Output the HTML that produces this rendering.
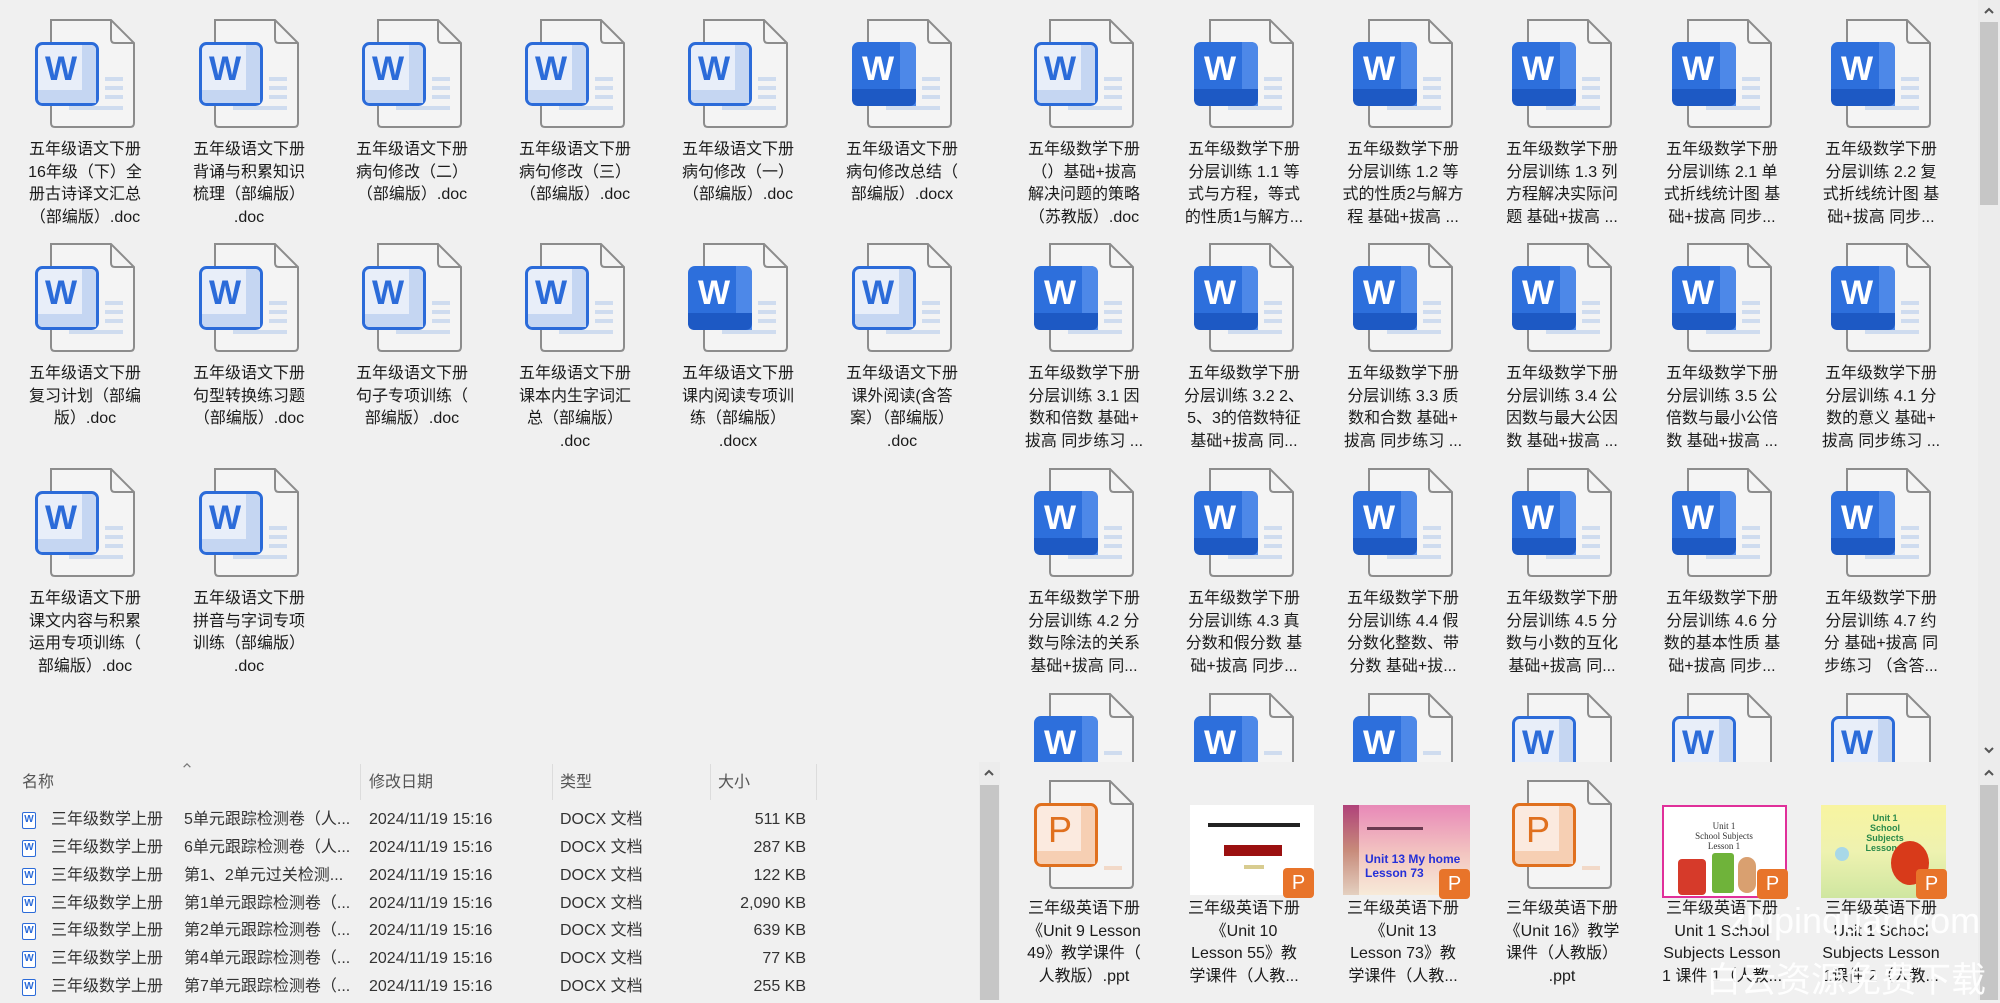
<!DOCTYPE html>
<html><head><meta charset="utf-8"><style>
*{margin:0;padding:0;box-sizing:border-box}
body{width:2000px;height:1000px;background:#f0f0f0;position:relative;overflow:hidden;font-family:"Liberation Sans","Noto Sans CJK SC",sans-serif;color:#1a1a1a}
.pane{position:absolute;overflow:hidden}
.it{position:absolute;width:160px}
.it svg{position:absolute;left:30px;top:0;width:100px;height:110px}
.it .t{position:absolute;left:0;top:120px;width:160px;text-align:center;font-size:16px;line-height:22.5px;white-space:nowrap}
.sb{position:absolute;background:#ececec}
.thumb{position:absolute;left:30px;top:25px;width:124px;height:90px}
.pb{position:absolute;width:31px;height:30px;background:#e8742a;border-radius:4px;color:#fff;font-size:20px;text-align:center;line-height:30px}
.row{position:absolute;left:0;height:28px;font-size:16px;line-height:28px;color:#333;white-space:nowrap}
.row span{position:absolute}
.hd{position:absolute;font-size:16px;color:#555}
.sep{position:absolute;top:764px;width:1px;height:36px;background:#dcdcdc}
.wi{position:absolute;left:22px;top:6px;width:14px;height:17px;border:1.5px solid #2b6bd9;border-radius:2px;background:#fff;color:#2b6bd9;font-size:10px;font-weight:bold;line-height:14px;text-align:center}
.chev{position:absolute;width:12px;height:8px}
</style></head><body>

<!-- Left top pane -->
<div class="pane" style="left:0;top:0;width:1000px;height:762px">
<div class="it" style="left:5px;top:19px"><svg viewBox="0 0 100 110"><path d="M16 1H76L99 24V104Q99 108 95 108H20Q16 108 16 104Z" fill="#f4f4f4" stroke="#8c8c8c" stroke-width="2"/><path d="M76 1V20Q76 24 80 24H99" fill="none" stroke="#8c8c8c" stroke-width="2"/><path d="M70 60H88M70 69H88M70 78H88M34 89H88" stroke="#cfdcef" stroke-width="4"/><rect x="1.5" y="24.5" width="61" height="61" rx="6" fill="#e8eef9" stroke="#2b6bd9" stroke-width="3"/><path d="M47 26H55Q61 26 61 32V84H47Z" fill="#c5d6f2"/><path d="M3 71H61V79Q61 84 56 84H8Q3 84 3 79Z" fill="#c5d6f2"/><text x="26" y="61" font-size="34" font-weight="bold" fill="#2b6bd9" text-anchor="middle" font-family="Liberation Sans">W</text></svg><div class="t">五年级语文下册<br>16年级（下）全<br>册古诗译文汇总<br>（部编版）.doc</div></div>
<div class="it" style="left:169px;top:19px"><svg viewBox="0 0 100 110"><path d="M16 1H76L99 24V104Q99 108 95 108H20Q16 108 16 104Z" fill="#f4f4f4" stroke="#8c8c8c" stroke-width="2"/><path d="M76 1V20Q76 24 80 24H99" fill="none" stroke="#8c8c8c" stroke-width="2"/><path d="M70 60H88M70 69H88M70 78H88M34 89H88" stroke="#cfdcef" stroke-width="4"/><rect x="1.5" y="24.5" width="61" height="61" rx="6" fill="#e8eef9" stroke="#2b6bd9" stroke-width="3"/><path d="M47 26H55Q61 26 61 32V84H47Z" fill="#c5d6f2"/><path d="M3 71H61V79Q61 84 56 84H8Q3 84 3 79Z" fill="#c5d6f2"/><text x="26" y="61" font-size="34" font-weight="bold" fill="#2b6bd9" text-anchor="middle" font-family="Liberation Sans">W</text></svg><div class="t">五年级语文下册<br>背诵与积累知识<br>梳理（部编版）<br>.doc</div></div>
<div class="it" style="left:332px;top:19px"><svg viewBox="0 0 100 110"><path d="M16 1H76L99 24V104Q99 108 95 108H20Q16 108 16 104Z" fill="#f4f4f4" stroke="#8c8c8c" stroke-width="2"/><path d="M76 1V20Q76 24 80 24H99" fill="none" stroke="#8c8c8c" stroke-width="2"/><path d="M70 60H88M70 69H88M70 78H88M34 89H88" stroke="#cfdcef" stroke-width="4"/><rect x="1.5" y="24.5" width="61" height="61" rx="6" fill="#e8eef9" stroke="#2b6bd9" stroke-width="3"/><path d="M47 26H55Q61 26 61 32V84H47Z" fill="#c5d6f2"/><path d="M3 71H61V79Q61 84 56 84H8Q3 84 3 79Z" fill="#c5d6f2"/><text x="26" y="61" font-size="34" font-weight="bold" fill="#2b6bd9" text-anchor="middle" font-family="Liberation Sans">W</text></svg><div class="t">五年级语文下册<br>病句修改（二）<br>（部编版）.doc</div></div>
<div class="it" style="left:495px;top:19px"><svg viewBox="0 0 100 110"><path d="M16 1H76L99 24V104Q99 108 95 108H20Q16 108 16 104Z" fill="#f4f4f4" stroke="#8c8c8c" stroke-width="2"/><path d="M76 1V20Q76 24 80 24H99" fill="none" stroke="#8c8c8c" stroke-width="2"/><path d="M70 60H88M70 69H88M70 78H88M34 89H88" stroke="#cfdcef" stroke-width="4"/><rect x="1.5" y="24.5" width="61" height="61" rx="6" fill="#e8eef9" stroke="#2b6bd9" stroke-width="3"/><path d="M47 26H55Q61 26 61 32V84H47Z" fill="#c5d6f2"/><path d="M3 71H61V79Q61 84 56 84H8Q3 84 3 79Z" fill="#c5d6f2"/><text x="26" y="61" font-size="34" font-weight="bold" fill="#2b6bd9" text-anchor="middle" font-family="Liberation Sans">W</text></svg><div class="t">五年级语文下册<br>病句修改（三）<br>（部编版）.doc</div></div>
<div class="it" style="left:658px;top:19px"><svg viewBox="0 0 100 110"><path d="M16 1H76L99 24V104Q99 108 95 108H20Q16 108 16 104Z" fill="#f4f4f4" stroke="#8c8c8c" stroke-width="2"/><path d="M76 1V20Q76 24 80 24H99" fill="none" stroke="#8c8c8c" stroke-width="2"/><path d="M70 60H88M70 69H88M70 78H88M34 89H88" stroke="#cfdcef" stroke-width="4"/><rect x="1.5" y="24.5" width="61" height="61" rx="6" fill="#e8eef9" stroke="#2b6bd9" stroke-width="3"/><path d="M47 26H55Q61 26 61 32V84H47Z" fill="#c5d6f2"/><path d="M3 71H61V79Q61 84 56 84H8Q3 84 3 79Z" fill="#c5d6f2"/><text x="26" y="61" font-size="34" font-weight="bold" fill="#2b6bd9" text-anchor="middle" font-family="Liberation Sans">W</text></svg><div class="t">五年级语文下册<br>病句修改（一）<br>（部编版）.doc</div></div>
<div class="it" style="left:822px;top:19px"><svg viewBox="0 0 100 110"><path d="M16 1H76L99 24V104Q99 108 95 108H20Q16 108 16 104Z" fill="#f4f4f4" stroke="#8c8c8c" stroke-width="2"/><path d="M76 1V20Q76 24 80 24H99" fill="none" stroke="#8c8c8c" stroke-width="2"/><path d="M70 60H88M70 69H88M70 78H88M34 89H88" stroke="#cfdcef" stroke-width="4"/><rect x="0" y="23" width="64" height="64" rx="7" fill="#2d6fdc"/><path d="M48 23H57Q64 23 64 30V87H48Z" fill="#4d88e8"/><path d="M0 70H64V80Q64 87 57 87H7Q0 87 0 80Z" fill="#1d59c4"/><text x="26" y="61" font-size="34" font-weight="bold" fill="#fff" text-anchor="middle" font-family="Liberation Sans">W</text></svg><div class="t">五年级语文下册<br>病句修改总结（<br>部编版）.docx</div></div>
<div class="it" style="left:5px;top:243px"><svg viewBox="0 0 100 110"><path d="M16 1H76L99 24V104Q99 108 95 108H20Q16 108 16 104Z" fill="#f4f4f4" stroke="#8c8c8c" stroke-width="2"/><path d="M76 1V20Q76 24 80 24H99" fill="none" stroke="#8c8c8c" stroke-width="2"/><path d="M70 60H88M70 69H88M70 78H88M34 89H88" stroke="#cfdcef" stroke-width="4"/><rect x="1.5" y="24.5" width="61" height="61" rx="6" fill="#e8eef9" stroke="#2b6bd9" stroke-width="3"/><path d="M47 26H55Q61 26 61 32V84H47Z" fill="#c5d6f2"/><path d="M3 71H61V79Q61 84 56 84H8Q3 84 3 79Z" fill="#c5d6f2"/><text x="26" y="61" font-size="34" font-weight="bold" fill="#2b6bd9" text-anchor="middle" font-family="Liberation Sans">W</text></svg><div class="t">五年级语文下册<br>复习计划（部编<br>版）.doc</div></div>
<div class="it" style="left:169px;top:243px"><svg viewBox="0 0 100 110"><path d="M16 1H76L99 24V104Q99 108 95 108H20Q16 108 16 104Z" fill="#f4f4f4" stroke="#8c8c8c" stroke-width="2"/><path d="M76 1V20Q76 24 80 24H99" fill="none" stroke="#8c8c8c" stroke-width="2"/><path d="M70 60H88M70 69H88M70 78H88M34 89H88" stroke="#cfdcef" stroke-width="4"/><rect x="1.5" y="24.5" width="61" height="61" rx="6" fill="#e8eef9" stroke="#2b6bd9" stroke-width="3"/><path d="M47 26H55Q61 26 61 32V84H47Z" fill="#c5d6f2"/><path d="M3 71H61V79Q61 84 56 84H8Q3 84 3 79Z" fill="#c5d6f2"/><text x="26" y="61" font-size="34" font-weight="bold" fill="#2b6bd9" text-anchor="middle" font-family="Liberation Sans">W</text></svg><div class="t">五年级语文下册<br>句型转换练习题<br>（部编版）.doc</div></div>
<div class="it" style="left:332px;top:243px"><svg viewBox="0 0 100 110"><path d="M16 1H76L99 24V104Q99 108 95 108H20Q16 108 16 104Z" fill="#f4f4f4" stroke="#8c8c8c" stroke-width="2"/><path d="M76 1V20Q76 24 80 24H99" fill="none" stroke="#8c8c8c" stroke-width="2"/><path d="M70 60H88M70 69H88M70 78H88M34 89H88" stroke="#cfdcef" stroke-width="4"/><rect x="1.5" y="24.5" width="61" height="61" rx="6" fill="#e8eef9" stroke="#2b6bd9" stroke-width="3"/><path d="M47 26H55Q61 26 61 32V84H47Z" fill="#c5d6f2"/><path d="M3 71H61V79Q61 84 56 84H8Q3 84 3 79Z" fill="#c5d6f2"/><text x="26" y="61" font-size="34" font-weight="bold" fill="#2b6bd9" text-anchor="middle" font-family="Liberation Sans">W</text></svg><div class="t">五年级语文下册<br>句子专项训练（<br>部编版）.doc</div></div>
<div class="it" style="left:495px;top:243px"><svg viewBox="0 0 100 110"><path d="M16 1H76L99 24V104Q99 108 95 108H20Q16 108 16 104Z" fill="#f4f4f4" stroke="#8c8c8c" stroke-width="2"/><path d="M76 1V20Q76 24 80 24H99" fill="none" stroke="#8c8c8c" stroke-width="2"/><path d="M70 60H88M70 69H88M70 78H88M34 89H88" stroke="#cfdcef" stroke-width="4"/><rect x="1.5" y="24.5" width="61" height="61" rx="6" fill="#e8eef9" stroke="#2b6bd9" stroke-width="3"/><path d="M47 26H55Q61 26 61 32V84H47Z" fill="#c5d6f2"/><path d="M3 71H61V79Q61 84 56 84H8Q3 84 3 79Z" fill="#c5d6f2"/><text x="26" y="61" font-size="34" font-weight="bold" fill="#2b6bd9" text-anchor="middle" font-family="Liberation Sans">W</text></svg><div class="t">五年级语文下册<br>课本内生字词汇<br>总（部编版）<br>.doc</div></div>
<div class="it" style="left:658px;top:243px"><svg viewBox="0 0 100 110"><path d="M16 1H76L99 24V104Q99 108 95 108H20Q16 108 16 104Z" fill="#f4f4f4" stroke="#8c8c8c" stroke-width="2"/><path d="M76 1V20Q76 24 80 24H99" fill="none" stroke="#8c8c8c" stroke-width="2"/><path d="M70 60H88M70 69H88M70 78H88M34 89H88" stroke="#cfdcef" stroke-width="4"/><rect x="0" y="23" width="64" height="64" rx="7" fill="#2d6fdc"/><path d="M48 23H57Q64 23 64 30V87H48Z" fill="#4d88e8"/><path d="M0 70H64V80Q64 87 57 87H7Q0 87 0 80Z" fill="#1d59c4"/><text x="26" y="61" font-size="34" font-weight="bold" fill="#fff" text-anchor="middle" font-family="Liberation Sans">W</text></svg><div class="t">五年级语文下册<br>课内阅读专项训<br>练（部编版）<br>.docx</div></div>
<div class="it" style="left:822px;top:243px"><svg viewBox="0 0 100 110"><path d="M16 1H76L99 24V104Q99 108 95 108H20Q16 108 16 104Z" fill="#f4f4f4" stroke="#8c8c8c" stroke-width="2"/><path d="M76 1V20Q76 24 80 24H99" fill="none" stroke="#8c8c8c" stroke-width="2"/><path d="M70 60H88M70 69H88M70 78H88M34 89H88" stroke="#cfdcef" stroke-width="4"/><rect x="1.5" y="24.5" width="61" height="61" rx="6" fill="#e8eef9" stroke="#2b6bd9" stroke-width="3"/><path d="M47 26H55Q61 26 61 32V84H47Z" fill="#c5d6f2"/><path d="M3 71H61V79Q61 84 56 84H8Q3 84 3 79Z" fill="#c5d6f2"/><text x="26" y="61" font-size="34" font-weight="bold" fill="#2b6bd9" text-anchor="middle" font-family="Liberation Sans">W</text></svg><div class="t">五年级语文下册<br>课外阅读(含答<br>案）（部编版）<br>.doc</div></div>
<div class="it" style="left:5px;top:468px"><svg viewBox="0 0 100 110"><path d="M16 1H76L99 24V104Q99 108 95 108H20Q16 108 16 104Z" fill="#f4f4f4" stroke="#8c8c8c" stroke-width="2"/><path d="M76 1V20Q76 24 80 24H99" fill="none" stroke="#8c8c8c" stroke-width="2"/><path d="M70 60H88M70 69H88M70 78H88M34 89H88" stroke="#cfdcef" stroke-width="4"/><rect x="1.5" y="24.5" width="61" height="61" rx="6" fill="#e8eef9" stroke="#2b6bd9" stroke-width="3"/><path d="M47 26H55Q61 26 61 32V84H47Z" fill="#c5d6f2"/><path d="M3 71H61V79Q61 84 56 84H8Q3 84 3 79Z" fill="#c5d6f2"/><text x="26" y="61" font-size="34" font-weight="bold" fill="#2b6bd9" text-anchor="middle" font-family="Liberation Sans">W</text></svg><div class="t">五年级语文下册<br>课文内容与积累<br>运用专项训练（<br>部编版）.doc</div></div>
<div class="it" style="left:169px;top:468px"><svg viewBox="0 0 100 110"><path d="M16 1H76L99 24V104Q99 108 95 108H20Q16 108 16 104Z" fill="#f4f4f4" stroke="#8c8c8c" stroke-width="2"/><path d="M76 1V20Q76 24 80 24H99" fill="none" stroke="#8c8c8c" stroke-width="2"/><path d="M70 60H88M70 69H88M70 78H88M34 89H88" stroke="#cfdcef" stroke-width="4"/><rect x="1.5" y="24.5" width="61" height="61" rx="6" fill="#e8eef9" stroke="#2b6bd9" stroke-width="3"/><path d="M47 26H55Q61 26 61 32V84H47Z" fill="#c5d6f2"/><path d="M3 71H61V79Q61 84 56 84H8Q3 84 3 79Z" fill="#c5d6f2"/><text x="26" y="61" font-size="34" font-weight="bold" fill="#2b6bd9" text-anchor="middle" font-family="Liberation Sans">W</text></svg><div class="t">五年级语文下册<br>拼音与字词专项<br>训练（部编版）<br>.doc</div></div>
</div>

<!-- Right top pane -->
<div class="pane" style="left:1004px;top:0;width:974px;height:762px">
<div class="it" style="left:0px;top:19px"><svg viewBox="0 0 100 110"><path d="M16 1H76L99 24V104Q99 108 95 108H20Q16 108 16 104Z" fill="#f4f4f4" stroke="#8c8c8c" stroke-width="2"/><path d="M76 1V20Q76 24 80 24H99" fill="none" stroke="#8c8c8c" stroke-width="2"/><path d="M70 60H88M70 69H88M70 78H88M34 89H88" stroke="#cfdcef" stroke-width="4"/><rect x="1.5" y="24.5" width="61" height="61" rx="6" fill="#e8eef9" stroke="#2b6bd9" stroke-width="3"/><path d="M47 26H55Q61 26 61 32V84H47Z" fill="#c5d6f2"/><path d="M3 71H61V79Q61 84 56 84H8Q3 84 3 79Z" fill="#c5d6f2"/><text x="26" y="61" font-size="34" font-weight="bold" fill="#2b6bd9" text-anchor="middle" font-family="Liberation Sans">W</text></svg><div class="t">五年级数学下册<br>（）基础+拔高<br>解决问题的策略<br>（苏教版）.doc</div></div>
<div class="it" style="left:160px;top:19px"><svg viewBox="0 0 100 110"><path d="M16 1H76L99 24V104Q99 108 95 108H20Q16 108 16 104Z" fill="#f4f4f4" stroke="#8c8c8c" stroke-width="2"/><path d="M76 1V20Q76 24 80 24H99" fill="none" stroke="#8c8c8c" stroke-width="2"/><path d="M70 60H88M70 69H88M70 78H88M34 89H88" stroke="#cfdcef" stroke-width="4"/><rect x="0" y="23" width="64" height="64" rx="7" fill="#2d6fdc"/><path d="M48 23H57Q64 23 64 30V87H48Z" fill="#4d88e8"/><path d="M0 70H64V80Q64 87 57 87H7Q0 87 0 80Z" fill="#1d59c4"/><text x="26" y="61" font-size="34" font-weight="bold" fill="#fff" text-anchor="middle" font-family="Liberation Sans">W</text></svg><div class="t">五年级数学下册<br>分层训练 1.1 等<br>式与方程，等式<br>的性质1与解方...</div></div>
<div class="it" style="left:319px;top:19px"><svg viewBox="0 0 100 110"><path d="M16 1H76L99 24V104Q99 108 95 108H20Q16 108 16 104Z" fill="#f4f4f4" stroke="#8c8c8c" stroke-width="2"/><path d="M76 1V20Q76 24 80 24H99" fill="none" stroke="#8c8c8c" stroke-width="2"/><path d="M70 60H88M70 69H88M70 78H88M34 89H88" stroke="#cfdcef" stroke-width="4"/><rect x="0" y="23" width="64" height="64" rx="7" fill="#2d6fdc"/><path d="M48 23H57Q64 23 64 30V87H48Z" fill="#4d88e8"/><path d="M0 70H64V80Q64 87 57 87H7Q0 87 0 80Z" fill="#1d59c4"/><text x="26" y="61" font-size="34" font-weight="bold" fill="#fff" text-anchor="middle" font-family="Liberation Sans">W</text></svg><div class="t">五年级数学下册<br>分层训练 1.2 等<br>式的性质2与解方<br>程 基础+拔高 ...</div></div>
<div class="it" style="left:478px;top:19px"><svg viewBox="0 0 100 110"><path d="M16 1H76L99 24V104Q99 108 95 108H20Q16 108 16 104Z" fill="#f4f4f4" stroke="#8c8c8c" stroke-width="2"/><path d="M76 1V20Q76 24 80 24H99" fill="none" stroke="#8c8c8c" stroke-width="2"/><path d="M70 60H88M70 69H88M70 78H88M34 89H88" stroke="#cfdcef" stroke-width="4"/><rect x="0" y="23" width="64" height="64" rx="7" fill="#2d6fdc"/><path d="M48 23H57Q64 23 64 30V87H48Z" fill="#4d88e8"/><path d="M0 70H64V80Q64 87 57 87H7Q0 87 0 80Z" fill="#1d59c4"/><text x="26" y="61" font-size="34" font-weight="bold" fill="#fff" text-anchor="middle" font-family="Liberation Sans">W</text></svg><div class="t">五年级数学下册<br>分层训练 1.3 列<br>方程解决实际问<br>题 基础+拔高 ...</div></div>
<div class="it" style="left:638px;top:19px"><svg viewBox="0 0 100 110"><path d="M16 1H76L99 24V104Q99 108 95 108H20Q16 108 16 104Z" fill="#f4f4f4" stroke="#8c8c8c" stroke-width="2"/><path d="M76 1V20Q76 24 80 24H99" fill="none" stroke="#8c8c8c" stroke-width="2"/><path d="M70 60H88M70 69H88M70 78H88M34 89H88" stroke="#cfdcef" stroke-width="4"/><rect x="0" y="23" width="64" height="64" rx="7" fill="#2d6fdc"/><path d="M48 23H57Q64 23 64 30V87H48Z" fill="#4d88e8"/><path d="M0 70H64V80Q64 87 57 87H7Q0 87 0 80Z" fill="#1d59c4"/><text x="26" y="61" font-size="34" font-weight="bold" fill="#fff" text-anchor="middle" font-family="Liberation Sans">W</text></svg><div class="t">五年级数学下册<br>分层训练 2.1 单<br>式折线统计图 基<br>础+拔高 同步...</div></div>
<div class="it" style="left:797px;top:19px"><svg viewBox="0 0 100 110"><path d="M16 1H76L99 24V104Q99 108 95 108H20Q16 108 16 104Z" fill="#f4f4f4" stroke="#8c8c8c" stroke-width="2"/><path d="M76 1V20Q76 24 80 24H99" fill="none" stroke="#8c8c8c" stroke-width="2"/><path d="M70 60H88M70 69H88M70 78H88M34 89H88" stroke="#cfdcef" stroke-width="4"/><rect x="0" y="23" width="64" height="64" rx="7" fill="#2d6fdc"/><path d="M48 23H57Q64 23 64 30V87H48Z" fill="#4d88e8"/><path d="M0 70H64V80Q64 87 57 87H7Q0 87 0 80Z" fill="#1d59c4"/><text x="26" y="61" font-size="34" font-weight="bold" fill="#fff" text-anchor="middle" font-family="Liberation Sans">W</text></svg><div class="t">五年级数学下册<br>分层训练 2.2 复<br>式折线统计图 基<br>础+拔高 同步...</div></div>
<div class="it" style="left:0px;top:243px"><svg viewBox="0 0 100 110"><path d="M16 1H76L99 24V104Q99 108 95 108H20Q16 108 16 104Z" fill="#f4f4f4" stroke="#8c8c8c" stroke-width="2"/><path d="M76 1V20Q76 24 80 24H99" fill="none" stroke="#8c8c8c" stroke-width="2"/><path d="M70 60H88M70 69H88M70 78H88M34 89H88" stroke="#cfdcef" stroke-width="4"/><rect x="0" y="23" width="64" height="64" rx="7" fill="#2d6fdc"/><path d="M48 23H57Q64 23 64 30V87H48Z" fill="#4d88e8"/><path d="M0 70H64V80Q64 87 57 87H7Q0 87 0 80Z" fill="#1d59c4"/><text x="26" y="61" font-size="34" font-weight="bold" fill="#fff" text-anchor="middle" font-family="Liberation Sans">W</text></svg><div class="t">五年级数学下册<br>分层训练 3.1 因<br>数和倍数 基础+<br>拔高 同步练习 ...</div></div>
<div class="it" style="left:160px;top:243px"><svg viewBox="0 0 100 110"><path d="M16 1H76L99 24V104Q99 108 95 108H20Q16 108 16 104Z" fill="#f4f4f4" stroke="#8c8c8c" stroke-width="2"/><path d="M76 1V20Q76 24 80 24H99" fill="none" stroke="#8c8c8c" stroke-width="2"/><path d="M70 60H88M70 69H88M70 78H88M34 89H88" stroke="#cfdcef" stroke-width="4"/><rect x="0" y="23" width="64" height="64" rx="7" fill="#2d6fdc"/><path d="M48 23H57Q64 23 64 30V87H48Z" fill="#4d88e8"/><path d="M0 70H64V80Q64 87 57 87H7Q0 87 0 80Z" fill="#1d59c4"/><text x="26" y="61" font-size="34" font-weight="bold" fill="#fff" text-anchor="middle" font-family="Liberation Sans">W</text></svg><div class="t">五年级数学下册<br>分层训练 3.2 2、<br>5、3的倍数特征<br>基础+拔高 同...</div></div>
<div class="it" style="left:319px;top:243px"><svg viewBox="0 0 100 110"><path d="M16 1H76L99 24V104Q99 108 95 108H20Q16 108 16 104Z" fill="#f4f4f4" stroke="#8c8c8c" stroke-width="2"/><path d="M76 1V20Q76 24 80 24H99" fill="none" stroke="#8c8c8c" stroke-width="2"/><path d="M70 60H88M70 69H88M70 78H88M34 89H88" stroke="#cfdcef" stroke-width="4"/><rect x="0" y="23" width="64" height="64" rx="7" fill="#2d6fdc"/><path d="M48 23H57Q64 23 64 30V87H48Z" fill="#4d88e8"/><path d="M0 70H64V80Q64 87 57 87H7Q0 87 0 80Z" fill="#1d59c4"/><text x="26" y="61" font-size="34" font-weight="bold" fill="#fff" text-anchor="middle" font-family="Liberation Sans">W</text></svg><div class="t">五年级数学下册<br>分层训练 3.3 质<br>数和合数 基础+<br>拔高 同步练习 ...</div></div>
<div class="it" style="left:478px;top:243px"><svg viewBox="0 0 100 110"><path d="M16 1H76L99 24V104Q99 108 95 108H20Q16 108 16 104Z" fill="#f4f4f4" stroke="#8c8c8c" stroke-width="2"/><path d="M76 1V20Q76 24 80 24H99" fill="none" stroke="#8c8c8c" stroke-width="2"/><path d="M70 60H88M70 69H88M70 78H88M34 89H88" stroke="#cfdcef" stroke-width="4"/><rect x="0" y="23" width="64" height="64" rx="7" fill="#2d6fdc"/><path d="M48 23H57Q64 23 64 30V87H48Z" fill="#4d88e8"/><path d="M0 70H64V80Q64 87 57 87H7Q0 87 0 80Z" fill="#1d59c4"/><text x="26" y="61" font-size="34" font-weight="bold" fill="#fff" text-anchor="middle" font-family="Liberation Sans">W</text></svg><div class="t">五年级数学下册<br>分层训练 3.4 公<br>因数与最大公因<br>数 基础+拔高 ...</div></div>
<div class="it" style="left:638px;top:243px"><svg viewBox="0 0 100 110"><path d="M16 1H76L99 24V104Q99 108 95 108H20Q16 108 16 104Z" fill="#f4f4f4" stroke="#8c8c8c" stroke-width="2"/><path d="M76 1V20Q76 24 80 24H99" fill="none" stroke="#8c8c8c" stroke-width="2"/><path d="M70 60H88M70 69H88M70 78H88M34 89H88" stroke="#cfdcef" stroke-width="4"/><rect x="0" y="23" width="64" height="64" rx="7" fill="#2d6fdc"/><path d="M48 23H57Q64 23 64 30V87H48Z" fill="#4d88e8"/><path d="M0 70H64V80Q64 87 57 87H7Q0 87 0 80Z" fill="#1d59c4"/><text x="26" y="61" font-size="34" font-weight="bold" fill="#fff" text-anchor="middle" font-family="Liberation Sans">W</text></svg><div class="t">五年级数学下册<br>分层训练 3.5 公<br>倍数与最小公倍<br>数 基础+拔高 ...</div></div>
<div class="it" style="left:797px;top:243px"><svg viewBox="0 0 100 110"><path d="M16 1H76L99 24V104Q99 108 95 108H20Q16 108 16 104Z" fill="#f4f4f4" stroke="#8c8c8c" stroke-width="2"/><path d="M76 1V20Q76 24 80 24H99" fill="none" stroke="#8c8c8c" stroke-width="2"/><path d="M70 60H88M70 69H88M70 78H88M34 89H88" stroke="#cfdcef" stroke-width="4"/><rect x="0" y="23" width="64" height="64" rx="7" fill="#2d6fdc"/><path d="M48 23H57Q64 23 64 30V87H48Z" fill="#4d88e8"/><path d="M0 70H64V80Q64 87 57 87H7Q0 87 0 80Z" fill="#1d59c4"/><text x="26" y="61" font-size="34" font-weight="bold" fill="#fff" text-anchor="middle" font-family="Liberation Sans">W</text></svg><div class="t">五年级数学下册<br>分层训练 4.1 分<br>数的意义 基础+<br>拔高 同步练习 ...</div></div>
<div class="it" style="left:0px;top:468px"><svg viewBox="0 0 100 110"><path d="M16 1H76L99 24V104Q99 108 95 108H20Q16 108 16 104Z" fill="#f4f4f4" stroke="#8c8c8c" stroke-width="2"/><path d="M76 1V20Q76 24 80 24H99" fill="none" stroke="#8c8c8c" stroke-width="2"/><path d="M70 60H88M70 69H88M70 78H88M34 89H88" stroke="#cfdcef" stroke-width="4"/><rect x="0" y="23" width="64" height="64" rx="7" fill="#2d6fdc"/><path d="M48 23H57Q64 23 64 30V87H48Z" fill="#4d88e8"/><path d="M0 70H64V80Q64 87 57 87H7Q0 87 0 80Z" fill="#1d59c4"/><text x="26" y="61" font-size="34" font-weight="bold" fill="#fff" text-anchor="middle" font-family="Liberation Sans">W</text></svg><div class="t">五年级数学下册<br>分层训练 4.2 分<br>数与除法的关系<br>基础+拔高 同...</div></div>
<div class="it" style="left:160px;top:468px"><svg viewBox="0 0 100 110"><path d="M16 1H76L99 24V104Q99 108 95 108H20Q16 108 16 104Z" fill="#f4f4f4" stroke="#8c8c8c" stroke-width="2"/><path d="M76 1V20Q76 24 80 24H99" fill="none" stroke="#8c8c8c" stroke-width="2"/><path d="M70 60H88M70 69H88M70 78H88M34 89H88" stroke="#cfdcef" stroke-width="4"/><rect x="0" y="23" width="64" height="64" rx="7" fill="#2d6fdc"/><path d="M48 23H57Q64 23 64 30V87H48Z" fill="#4d88e8"/><path d="M0 70H64V80Q64 87 57 87H7Q0 87 0 80Z" fill="#1d59c4"/><text x="26" y="61" font-size="34" font-weight="bold" fill="#fff" text-anchor="middle" font-family="Liberation Sans">W</text></svg><div class="t">五年级数学下册<br>分层训练 4.3 真<br>分数和假分数 基<br>础+拔高 同步...</div></div>
<div class="it" style="left:319px;top:468px"><svg viewBox="0 0 100 110"><path d="M16 1H76L99 24V104Q99 108 95 108H20Q16 108 16 104Z" fill="#f4f4f4" stroke="#8c8c8c" stroke-width="2"/><path d="M76 1V20Q76 24 80 24H99" fill="none" stroke="#8c8c8c" stroke-width="2"/><path d="M70 60H88M70 69H88M70 78H88M34 89H88" stroke="#cfdcef" stroke-width="4"/><rect x="0" y="23" width="64" height="64" rx="7" fill="#2d6fdc"/><path d="M48 23H57Q64 23 64 30V87H48Z" fill="#4d88e8"/><path d="M0 70H64V80Q64 87 57 87H7Q0 87 0 80Z" fill="#1d59c4"/><text x="26" y="61" font-size="34" font-weight="bold" fill="#fff" text-anchor="middle" font-family="Liberation Sans">W</text></svg><div class="t">五年级数学下册<br>分层训练 4.4 假<br>分数化整数、带<br>分数 基础+拔...</div></div>
<div class="it" style="left:478px;top:468px"><svg viewBox="0 0 100 110"><path d="M16 1H76L99 24V104Q99 108 95 108H20Q16 108 16 104Z" fill="#f4f4f4" stroke="#8c8c8c" stroke-width="2"/><path d="M76 1V20Q76 24 80 24H99" fill="none" stroke="#8c8c8c" stroke-width="2"/><path d="M70 60H88M70 69H88M70 78H88M34 89H88" stroke="#cfdcef" stroke-width="4"/><rect x="0" y="23" width="64" height="64" rx="7" fill="#2d6fdc"/><path d="M48 23H57Q64 23 64 30V87H48Z" fill="#4d88e8"/><path d="M0 70H64V80Q64 87 57 87H7Q0 87 0 80Z" fill="#1d59c4"/><text x="26" y="61" font-size="34" font-weight="bold" fill="#fff" text-anchor="middle" font-family="Liberation Sans">W</text></svg><div class="t">五年级数学下册<br>分层训练 4.5 分<br>数与小数的互化<br>基础+拔高 同...</div></div>
<div class="it" style="left:638px;top:468px"><svg viewBox="0 0 100 110"><path d="M16 1H76L99 24V104Q99 108 95 108H20Q16 108 16 104Z" fill="#f4f4f4" stroke="#8c8c8c" stroke-width="2"/><path d="M76 1V20Q76 24 80 24H99" fill="none" stroke="#8c8c8c" stroke-width="2"/><path d="M70 60H88M70 69H88M70 78H88M34 89H88" stroke="#cfdcef" stroke-width="4"/><rect x="0" y="23" width="64" height="64" rx="7" fill="#2d6fdc"/><path d="M48 23H57Q64 23 64 30V87H48Z" fill="#4d88e8"/><path d="M0 70H64V80Q64 87 57 87H7Q0 87 0 80Z" fill="#1d59c4"/><text x="26" y="61" font-size="34" font-weight="bold" fill="#fff" text-anchor="middle" font-family="Liberation Sans">W</text></svg><div class="t">五年级数学下册<br>分层训练 4.6 分<br>数的基本性质 基<br>础+拔高 同步...</div></div>
<div class="it" style="left:797px;top:468px"><svg viewBox="0 0 100 110"><path d="M16 1H76L99 24V104Q99 108 95 108H20Q16 108 16 104Z" fill="#f4f4f4" stroke="#8c8c8c" stroke-width="2"/><path d="M76 1V20Q76 24 80 24H99" fill="none" stroke="#8c8c8c" stroke-width="2"/><path d="M70 60H88M70 69H88M70 78H88M34 89H88" stroke="#cfdcef" stroke-width="4"/><rect x="0" y="23" width="64" height="64" rx="7" fill="#2d6fdc"/><path d="M48 23H57Q64 23 64 30V87H48Z" fill="#4d88e8"/><path d="M0 70H64V80Q64 87 57 87H7Q0 87 0 80Z" fill="#1d59c4"/><text x="26" y="61" font-size="34" font-weight="bold" fill="#fff" text-anchor="middle" font-family="Liberation Sans">W</text></svg><div class="t">五年级数学下册<br>分层训练 4.7 约<br>分 基础+拔高 同<br>步练习 （含答...</div></div>
<div class="it" style="left:0px;top:693px"><svg viewBox="0 0 100 110"><path d="M16 1H76L99 24V104Q99 108 95 108H20Q16 108 16 104Z" fill="#f4f4f4" stroke="#8c8c8c" stroke-width="2"/><path d="M76 1V20Q76 24 80 24H99" fill="none" stroke="#8c8c8c" stroke-width="2"/><path d="M70 60H88" stroke="#cfdcef" stroke-width="4"/><rect x="0" y="23" width="64" height="64" rx="7" fill="#2d6fdc"/><path d="M48 23H57Q64 23 64 30V87H48Z" fill="#4d88e8"/><text x="26" y="61" font-size="34" font-weight="bold" fill="#fff" text-anchor="middle" font-family="Liberation Sans">W</text></svg></div>
<div class="it" style="left:160px;top:693px"><svg viewBox="0 0 100 110"><path d="M16 1H76L99 24V104Q99 108 95 108H20Q16 108 16 104Z" fill="#f4f4f4" stroke="#8c8c8c" stroke-width="2"/><path d="M76 1V20Q76 24 80 24H99" fill="none" stroke="#8c8c8c" stroke-width="2"/><path d="M70 60H88" stroke="#cfdcef" stroke-width="4"/><rect x="0" y="23" width="64" height="64" rx="7" fill="#2d6fdc"/><path d="M48 23H57Q64 23 64 30V87H48Z" fill="#4d88e8"/><text x="26" y="61" font-size="34" font-weight="bold" fill="#fff" text-anchor="middle" font-family="Liberation Sans">W</text></svg></div>
<div class="it" style="left:319px;top:693px"><svg viewBox="0 0 100 110"><path d="M16 1H76L99 24V104Q99 108 95 108H20Q16 108 16 104Z" fill="#f4f4f4" stroke="#8c8c8c" stroke-width="2"/><path d="M76 1V20Q76 24 80 24H99" fill="none" stroke="#8c8c8c" stroke-width="2"/><path d="M70 60H88" stroke="#cfdcef" stroke-width="4"/><rect x="0" y="23" width="64" height="64" rx="7" fill="#2d6fdc"/><path d="M48 23H57Q64 23 64 30V87H48Z" fill="#4d88e8"/><text x="26" y="61" font-size="34" font-weight="bold" fill="#fff" text-anchor="middle" font-family="Liberation Sans">W</text></svg></div>
<div class="it" style="left:478px;top:693px"><svg viewBox="0 0 100 110"><path d="M16 1H76L99 24V104Q99 108 95 108H20Q16 108 16 104Z" fill="#f4f4f4" stroke="#8c8c8c" stroke-width="2"/><path d="M76 1V20Q76 24 80 24H99" fill="none" stroke="#8c8c8c" stroke-width="2"/><rect x="1.5" y="24.5" width="61" height="61" rx="6" fill="#e8eef9" stroke="#2b6bd9" stroke-width="3"/><path d="M47 26H55Q61 26 61 32V84H47Z" fill="#c5d6f2"/><text x="26" y="61" font-size="34" font-weight="bold" fill="#2b6bd9" text-anchor="middle" font-family="Liberation Sans">W</text></svg></div>
<div class="it" style="left:638px;top:693px"><svg viewBox="0 0 100 110"><path d="M16 1H76L99 24V104Q99 108 95 108H20Q16 108 16 104Z" fill="#f4f4f4" stroke="#8c8c8c" stroke-width="2"/><path d="M76 1V20Q76 24 80 24H99" fill="none" stroke="#8c8c8c" stroke-width="2"/><rect x="1.5" y="24.5" width="61" height="61" rx="6" fill="#e8eef9" stroke="#2b6bd9" stroke-width="3"/><path d="M47 26H55Q61 26 61 32V84H47Z" fill="#c5d6f2"/><text x="26" y="61" font-size="34" font-weight="bold" fill="#2b6bd9" text-anchor="middle" font-family="Liberation Sans">W</text></svg></div>
<div class="it" style="left:797px;top:693px"><svg viewBox="0 0 100 110"><path d="M16 1H76L99 24V104Q99 108 95 108H20Q16 108 16 104Z" fill="#f4f4f4" stroke="#8c8c8c" stroke-width="2"/><path d="M76 1V20Q76 24 80 24H99" fill="none" stroke="#8c8c8c" stroke-width="2"/><rect x="1.5" y="24.5" width="61" height="61" rx="6" fill="#e8eef9" stroke="#2b6bd9" stroke-width="3"/><path d="M47 26H55Q61 26 61 32V84H47Z" fill="#c5d6f2"/><text x="26" y="61" font-size="34" font-weight="bold" fill="#2b6bd9" text-anchor="middle" font-family="Liberation Sans">W</text></svg></div>
</div>

<!-- Right scrollbar top -->
<div class="sb" style="left:1978px;top:0;width:22px;height:762px"></div>
<div style="position:absolute;left:1980px;top:22px;width:18px;height:183px;background:#c6c6c6"></div>
<svg class="chev" style="left:1983px;top:7px" viewBox="0 0 12 8"><path d="M2 6L6 2L10 6" fill="none" stroke="#555" stroke-width="2"/></svg>
<svg class="chev" style="left:1983px;top:746px" viewBox="0 0 12 8"><path d="M2 2L6 6L10 2" fill="none" stroke="#555" stroke-width="2"/></svg>

<!-- Bottom right pane (ppt) -->
<div class="pane" style="left:1004px;top:762px;width:974px;height:238px">
<div class="it" style="left:0px;top:18px"><svg viewBox="0 0 100 110"><path d="M16 1H76L99 24V104Q99 108 95 108H20Q16 108 16 104Z" fill="#f4f4f4" stroke="#8c8c8c" stroke-width="2"/><path d="M76 1V20Q76 24 80 24H99" fill="none" stroke="#8c8c8c" stroke-width="2"/><path d="M70 88H88" stroke="#f2d9c8" stroke-width="4"/><rect x="1.5" y="24.5" width="61" height="61" rx="6" fill="#fbeadf" stroke="#e0701e" stroke-width="3"/><path d="M47 26H55Q61 26 61 32V84H47Z" fill="#f6cfb3"/><path d="M3 71H61V79Q61 84 56 84H8Q3 84 3 79Z" fill="#f6cfb3"/><text x="26" y="62" font-size="36" fill="#e0701e" text-anchor="middle" font-family="Liberation Sans">P</text></svg><div class="t" style="top:118px">三年级英语下册<br>《Unit 9 Lesson<br>49》教学课件（<br>人教版）.ppt</div></div>
<div class="it" style="left:160px;top:18px"><div class="thumb" style="left:26px;background:#fff">
<div style="position:absolute;left:18px;top:18px;width:92px;height:4px;background:#222"></div>
<div style="position:absolute;left:34px;top:40px;width:58px;height:11px;background:#9b1010"></div>
<div style="position:absolute;left:54px;top:60px;width:20px;height:4px;background:#d8cc90"></div></div>
<div class="pb" style="left:119px;top:88px">P</div><div class="t" style="top:118px">三年级英语下册<br>《Unit 10<br>Lesson 55》教<br>学课件（人教...</div></div>
<div class="it" style="left:319px;top:18px"><div class="thumb" style="left:20px;top:25px;width:127px;height:90px;background:linear-gradient(#e889b8,#f3c6c1 55%,#f7ead8)">
<div style="position:absolute;left:0;top:0;width:16px;height:90px;background:linear-gradient(#b0427a,#c78a7a,#e4d0c0)"></div>
<div style="position:absolute;left:24px;top:22px;width:56px;height:3px;background:#6a3a50"></div>
<div style="position:absolute;left:22px;top:47px;font:bold 12px 'Liberation Sans';color:#2430d8;line-height:14px">Unit 13 My home<br>Lesson 73</div></div>
<div class="pb" style="left:116px;top:89px">P</div><div class="t" style="top:118px">三年级英语下册<br>《Unit 13<br>Lesson 73》教<br>学课件（人教...</div></div>
<div class="it" style="left:478px;top:18px"><svg viewBox="0 0 100 110"><path d="M16 1H76L99 24V104Q99 108 95 108H20Q16 108 16 104Z" fill="#f4f4f4" stroke="#8c8c8c" stroke-width="2"/><path d="M76 1V20Q76 24 80 24H99" fill="none" stroke="#8c8c8c" stroke-width="2"/><path d="M70 88H88" stroke="#f2d9c8" stroke-width="4"/><rect x="1.5" y="24.5" width="61" height="61" rx="6" fill="#fbeadf" stroke="#e0701e" stroke-width="3"/><path d="M47 26H55Q61 26 61 32V84H47Z" fill="#f6cfb3"/><path d="M3 71H61V79Q61 84 56 84H8Q3 84 3 79Z" fill="#f6cfb3"/><text x="26" y="62" font-size="36" fill="#e0701e" text-anchor="middle" font-family="Liberation Sans">P</text></svg><div class="t" style="top:118px">三年级英语下册<br>《Unit 16》教学<br>课件（人教版）<br>.ppt</div></div>
<div class="it" style="left:638px;top:18px"><div class="thumb" style="left:20px;top:25px;width:125px;height:93px;background:#fff;border:2px solid #e0309a">
<div style="position:absolute;left:30px;top:14px;font:9px 'Liberation Serif';color:#333;text-align:center;width:60px;line-height:10px">Unit 1<br>School Subjects<br>Lesson 1</div>
<div style="position:absolute;left:14px;top:52px;width:28px;height:36px;background:#d63a2a;border-radius:4px"></div>
<div style="position:absolute;left:48px;top:46px;width:22px;height:40px;background:#6fb33a;border-radius:3px"></div>
<div style="position:absolute;left:74px;top:50px;width:18px;height:36px;background:#d9a070;border-radius:9px"></div></div>
<div class="pb" style="left:115px;top:89px">P</div><div class="t" style="top:118px">三年级英语下册<br>Unit 1 School<br>Subjects Lesson<br>1 课件 1（人教...</div></div>
<div class="it" style="left:797px;top:18px"><div class="thumb" style="left:20px;top:25px;width:125px;height:93px;background:linear-gradient(#f8f4a0,#eef2b0 50%,#cfe6a0)">
<div style="position:absolute;left:36px;top:8px;font:bold 9px 'Liberation Sans';color:#2a8a4a;text-align:center;width:56px;line-height:10px">Unit 1<br>School Subjects<br>Lesson 1</div>
<div style="position:absolute;left:70px;top:36px;width:38px;height:44px;background:#d83a1a;border-radius:50%"></div>
<div style="position:absolute;left:14px;top:42px;width:14px;height:14px;background:#a8d8e8;border-radius:50%"></div></div>
<div class="pb" style="left:115px;top:89px">P</div><div class="t" style="top:118px">三年级英语下册<br>Unit 1 School<br>Subjects Lesson<br>1课件 2（人教...</div></div>
</div>
<div class="sb" style="left:1978px;top:762px;width:22px;height:238px"></div>
<div style="position:absolute;left:1980px;top:785px;width:18px;height:215px;background:#c6c6c6"></div>
<svg class="chev" style="left:1983px;top:769px" viewBox="0 0 12 8"><path d="M2 6L6 2L10 6" fill="none" stroke="#555" stroke-width="2"/></svg>

<!-- Bottom left details pane -->
<div class="pane" style="left:0;top:762px;width:1000px;height:238px">
<div class="hd" style="left:22px;top:6px">名称</div>
<svg class="chev" style="left:182px;top:0px;width:10px;height:7px" viewBox="0 0 12 8"><path d="M2 6L6 2L10 6" fill="none" stroke="#777" stroke-width="1.5"/></svg>
<div class="hd" style="left:369px;top:6px">修改日期</div>
<div class="hd" style="left:560px;top:6px">类型</div>
<div class="hd" style="left:718px;top:6px">大小</div>
</div>
<div class="sep" style="left:360px"></div><div class="sep" style="left:552px"></div><div class="sep" style="left:710px"></div><div class="sep" style="left:816px"></div>

<div class="row" style="top:806px;width:980px"><i class="wi" style="top:6px;font-style:normal">W</i><span style="left:51px">三年级数学上册</span><span style="left:184px">5单元跟踪检测卷（人...</span><span style="left:369px">2024/11/19 15:16</span><span style="left:560px">DOCX 文档</span><span style="left:700px;width:106px;text-align:right">511 KB</span></div>
<div class="row" style="top:834px;width:980px"><i class="wi" style="top:6px;font-style:normal">W</i><span style="left:51px">三年级数学上册</span><span style="left:184px">6单元跟踪检测卷（人...</span><span style="left:369px">2024/11/19 15:16</span><span style="left:560px">DOCX 文档</span><span style="left:700px;width:106px;text-align:right">287 KB</span></div>
<div class="row" style="top:862px;width:980px"><i class="wi" style="top:6px;font-style:normal">W</i><span style="left:51px">三年级数学上册</span><span style="left:184px">第1、2单元过关检测...</span><span style="left:369px">2024/11/19 15:16</span><span style="left:560px">DOCX 文档</span><span style="left:700px;width:106px;text-align:right">122 KB</span></div>
<div class="row" style="top:890px;width:980px"><i class="wi" style="top:6px;font-style:normal">W</i><span style="left:51px">三年级数学上册</span><span style="left:184px">第1单元跟踪检测卷（...</span><span style="left:369px">2024/11/19 15:16</span><span style="left:560px">DOCX 文档</span><span style="left:700px;width:106px;text-align:right">2,090 KB</span></div>
<div class="row" style="top:917px;width:980px"><i class="wi" style="top:6px;font-style:normal">W</i><span style="left:51px">三年级数学上册</span><span style="left:184px">第2单元跟踪检测卷（...</span><span style="left:369px">2024/11/19 15:16</span><span style="left:560px">DOCX 文档</span><span style="left:700px;width:106px;text-align:right">639 KB</span></div>
<div class="row" style="top:945px;width:980px"><i class="wi" style="top:6px;font-style:normal">W</i><span style="left:51px">三年级数学上册</span><span style="left:184px">第4单元跟踪检测卷（...</span><span style="left:369px">2024/11/19 15:16</span><span style="left:560px">DOCX 文档</span><span style="left:700px;width:106px;text-align:right">77 KB</span></div>
<div class="row" style="top:973px;width:980px"><i class="wi" style="top:6px;font-style:normal">W</i><span style="left:51px">三年级数学上册</span><span style="left:184px">第7单元跟踪检测卷（...</span><span style="left:369px">2024/11/19 15:16</span><span style="left:560px">DOCX 文档</span><span style="left:700px;width:106px;text-align:right">255 KB</span></div>

<div class="sb" style="left:979px;top:762px;width:21px;height:238px"></div>
<div style="position:absolute;left:980px;top:785px;width:19px;height:215px;background:#c6c6c6"></div>
<svg class="chev" style="left:983px;top:769px" viewBox="0 0 12 8"><path d="M2 6L6 2L10 6" fill="none" stroke="#555" stroke-width="2"/></svg>

<!-- watermark -->
<div style="position:absolute;left:1728px;top:900px;font:36px 'Liberation Sans',sans-serif;color:rgba(255,255,255,.92);white-space:nowrap">zhipinquan.com</div>
<div style="position:absolute;left:1706px;top:952px;font:35px 'Liberation Sans','Noto Sans CJK SC',sans-serif;color:rgba(255,255,255,.92);white-space:nowrap">白云资源免费下载</div>
</body></html>
